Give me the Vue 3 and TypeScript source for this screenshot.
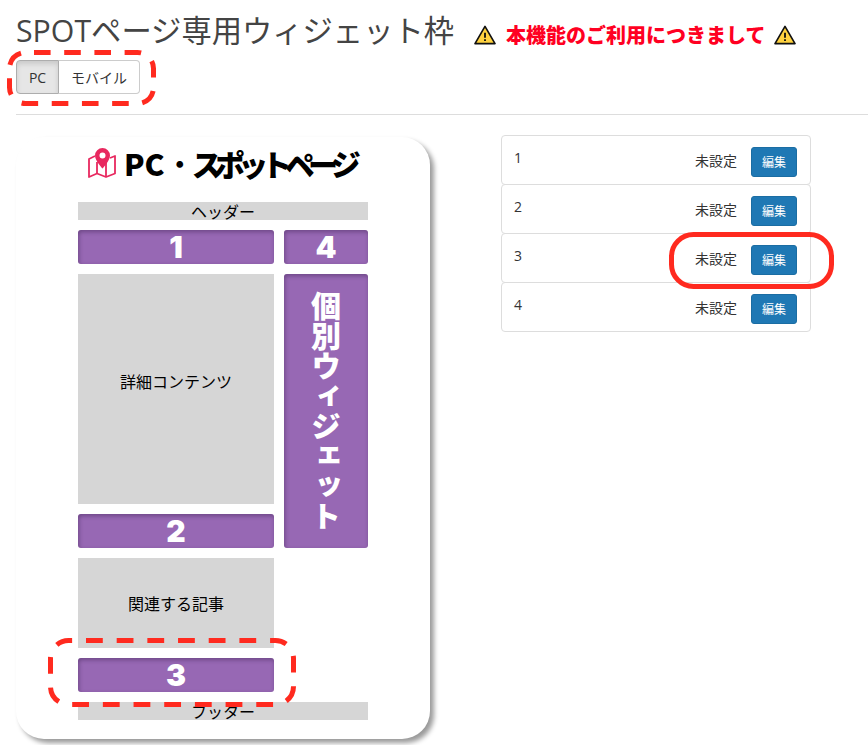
<script setup lang="ts">
const rows = [1, 2, 3, 4]
</script>

<template>
  <div class="page">
    <div class="heading">
      <h1 class="title">SPOTページ専用ウィジェット枠</h1>
      <svg class="warn" viewBox="0 0 24 22"><path d="M12 1.500 23 20.500H1Z" fill="#ffd23f" stroke="#111" stroke-width="1.800" stroke-linejoin="round"/><path d="M12 8.500v5.500M12 15.800v1.800" stroke="#111" stroke-width="2"/></svg>
      <span class="notice">本機能のご利用につきまして</span>
      <svg class="warn after" viewBox="0 0 24 22"><path d="M12 1.500 23 20.500H1Z" fill="#ffd23f" stroke="#111" stroke-width="1.800" stroke-linejoin="round"/><path d="M12 8.500v5.500M12 15.800v1.800" stroke="#111" stroke-width="2"/></svg>
    </div>
    <div class="toggle">
      <button class="tab active">PC</button>
      <button class="tab">モバイル</button>
    </div>
    <hr class="rule" />
    <div class="content">
      <div class="card">
        <div class="logo">
          <svg class="pin" viewBox="0 0 28 30">
            <path d="M7 8 1 11v18l8-3.500 9 3.500 9-3.500V8l-5 2" fill="none" stroke="#e8285f" stroke-width="1.800" stroke-linejoin="round"/>
            <path d="M9 25V14M18 29V15" fill="none" stroke="#e8285f" stroke-width="1.800"/>
            <path fill-rule="evenodd" d="M14.500 0a7.500 7.500 0 0 1 7.500 7.500C22 13 14.500 20.500 14.500 20.500S7 13 7 7.500A7.500 7.500 0 0 1 14.500 0Zm0 4.500a3 3 0 1 0 0 6 3 3 0 0 0 0-6Z" fill="#e8285f"/>
          </svg>
          <span class="logo-text">PC<span class="dot">・</span><span class="kana">スポットページ</span></span>
        </div>
        <div class="plan">
          <div class="gray wide">ヘッダー</div>
          <div class="slot">1</div>
          <div class="slot">4</div>
          <div class="gray main">詳細コンテンツ</div>
          <div class="slot vertical">個別ウィジェット</div>
          <div class="slot">2</div>
          <div class="gray">関連する記事</div>
          <div class="blank"></div>
          <div class="slot">3</div>
          <div class="blank"></div>
          <div class="gray wide">フッター</div>
        </div>
      </div>
      <ul class="list">
        <li v-for="n in rows" :key="n" class="row">
          <span class="num">{{ n }}</span>
          <span class="state">未設定</span>
          <button class="edit">編集</button>
        </li>
      </ul>
    </div>
    <svg class="mark m1" viewBox="0 0 149 56"><rect x="2.500" y="2.500" width="144" height="51" rx="16" class="dash d1"/></svg>
    <svg class="mark m2" viewBox="0 0 248 69"><rect x="2.500" y="2.500" width="243" height="64" rx="18" class="dash d2"/></svg>
    <svg class="mark m3" viewBox="0 0 165 57"><rect x="2.500" y="2.500" width="160" height="52" rx="22" class="solid"/></svg>
  </div>
</template>

<style scoped>
.page {
  position: relative;
  width: 868px;
  height: 745px;
  overflow: hidden;
  font-family: "Open Sans", "Noto Sans CJK JP", sans-serif;
  color: #333;
  box-sizing: border-box;
  padding: 11px 0 0 16px;
}
.heading {
  display: flex;
  align-items: center;
  height: 40px;
}
.title {
  margin: 0;
  font-size: 30.300px;
  font-weight: 400;
  color: #444;
  line-height: 40px;
  white-space: nowrap;
}
.warn {
  width: 22px;
  height: 20px;
  margin: 7px 0 0 20px;
  flex: none;
}
.warn.after {
  margin-left: 9px;
}
.notice {
  margin: 7px 0 0 10px;
  font-size: 20px;
  font-weight: 900;
  color: #ff0022;
  white-space: nowrap;
}
.toggle {
  display: flex;
  width: 124px;
  height: 34px;
  margin-top: 9px;
}
.tab {
  padding: 0;
  font: inherit;
  font-size: 14px;
  color: #333;
  background: #fff;
  border: 1px solid #ccc;
  height: 34px;
  box-sizing: border-box;
}
.tab.active {
  width: 43px;
  background: #e6e6e6;
  border-color: #adadad;
  border-radius: 4px 0 0 4px;
  box-shadow: inset 0 3px 5px rgba(0, 0, 0, 0.125);
}
.tab:not(.active) {
  width: 81px;
  border-left: 0;
  border-radius: 0 4px 4px 0;
}
.rule {
  margin: 20px 0 0;
  border: 0;
  border-top: 1px solid #ddd;
}
.content {
  display: flex;
  align-items: flex-start;
  margin-top: 20px;
}
.card {
  width: 414px;
  height: 602px;
  margin-top: 2px;
  box-sizing: border-box;
  padding-left: 62px;
  background: #fff;
  border-radius: 28px;
  box-shadow: 4px 4px 5px rgba(0, 0, 0, 0.4);
  flex: none;
}
.logo {
  display: flex;
  align-items: center;
  height: 65px;
  margin-left: 10px;
  padding-bottom: 13px;
  box-sizing: border-box;
}
.pin {
  width: 28px;
  height: 30px;
  flex: none;
}
.logo-text {
  display: flex;
  align-items: center;
  margin-left: 8px;
  font-family: "Noto Sans CJK JP", sans-serif;
  font-size: 30px;
  font-weight: 900;
  line-height: 30px;
  color: #000;
  white-space: nowrap;
}
.dot {
  width: 24px;
  text-align: center;
  font-size: 24px;
  margin-left: 3px;
}
.kana {
  letter-spacing: -6.700px;
}
.plan {
  display: grid;
  grid-template-columns: 196px 84px;
  grid-template-rows: 18px 34px 230px 34px 90px 34px 18px;
  gap: 10px;
  width: 290px;
}
.gray {
  display: flex;
  align-items: center;
  justify-content: center;
  background: #d6d6d6;
  color: #000;
  font-family: "Noto Sans CJK JP", sans-serif;
  font-size: 16px;
}
.wide {
  grid-column: 1 / 3;
}
.main {
  grid-row: 3;
  padding-bottom: 16px;
}
.slot {
  display: flex;
  align-items: center;
  justify-content: center;
  background: #9768b4;
  color: #fff;
  border-radius: 3px;
  font-family: Inter, "Noto Sans CJK JP", sans-serif;
  font-size: 30px;
  font-weight: 900;
  box-shadow: inset 1px 2px 4px rgba(60, 30, 80, 0.45);
}
.vertical {
  grid-column: 2;
  grid-row: 3 / 5;
  writing-mode: vertical-rl;
  font-family: "Noto Sans CJK JP", sans-serif;
}
.list {
  list-style: none;
  width: 310px;
  margin: 0 0 0 71px;
  padding: 0;
}
.row {
  display: flex;
  align-items: center;
  height: 50px;
  margin-bottom: -1px;
  padding: 0 13px 0 12px;
  box-sizing: border-box;
  border: 1px solid #ddd;
  border-radius: 4px;
  background: #fff;
}
.num {
  margin-right: auto;
  margin-top: -6px;
  font-size: 14px;
}
.state {
  font-size: 14px;
}
.edit {
  width: 46px;
  height: 30px;
  margin: 4px 0 0 14px;
  padding: 0;
  font: inherit;
  font-size: 12px;
  color: #fff;
  background: #1f78b4;
  border: 1px solid #1b6da3;
  border-radius: 3px;
}
.mark {
  position: absolute;
  overflow: visible;
}
.m1 {
  left: 7px;
  top: 50px;
  width: 149px;
  height: 56px;
}
.m2 {
  left: 48px;
  top: 638px;
  width: 248px;
  height: 69px;
}
.m3 {
  left: 669px;
  top: 232px;
  width: 165px;
  height: 57px;
}
.dash {
  fill: none;
  stroke: #ff2a1f;
  stroke-width: 5;
}
.d1 {
  stroke-dasharray: 16.600 13.600;
  stroke-dashoffset: -8.500;
}
.d2 {
  stroke-dasharray: 16.800 13.880;
  stroke-dashoffset: -17.500;
}
.solid {
  fill: none;
  stroke: #ff2a1f;
  stroke-width: 5;
}
</style>
